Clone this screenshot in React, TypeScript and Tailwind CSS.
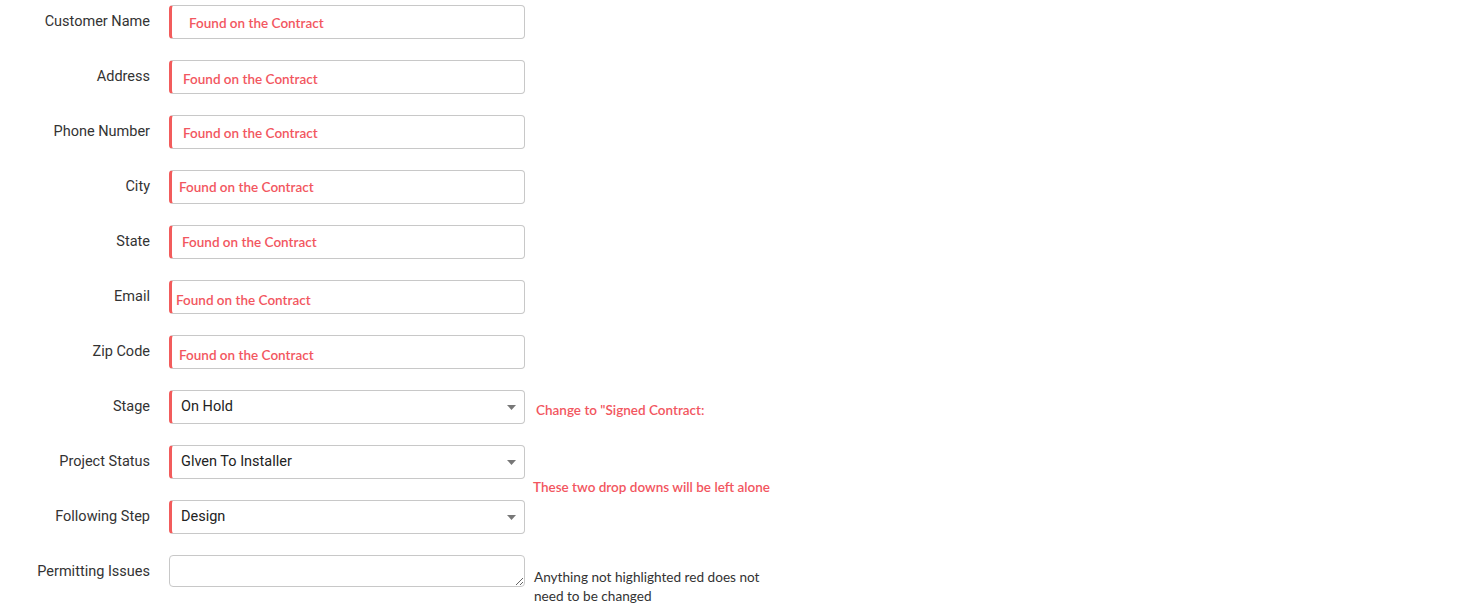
import React from 'react';

// Contract form screenshot: labelled inputs with red placeholder notes,
// three dropdowns and a textarea, plus annotations to the right.
const textFields: { label: string; pad: string; top: string }[] = [
  { label: 'Customer Name', pad: 'pl-[17px]', top: 'pt-[2px]' },
  { label: 'Address', pad: 'pl-[11px]', top: 'pt-[5px]' },
  { label: 'Phone Number', pad: 'pl-[11px]', top: 'pt-[3px]' },
  { label: 'City', pad: 'pl-[7px]', top: 'pt-[-1px]' },
  { label: 'State', pad: 'pl-[10px]', top: 'pt-[0px]' },
  { label: 'Email', pad: 'pl-[4px]', top: 'pt-[6px]' },
  { label: 'Zip Code', pad: 'pl-[7px]', top: 'pt-[6px]' },
];

const labelCls =
  'w-[150px] shrink-0 text-right text-[14.5px] leading-none text-[#333] font-["Roboto",sans-serif] pt-[10px]';
const boxCls =
  'h-[34px] w-[356px] shrink-0 rounded-[4px] border border-[#c8c8c8] border-l-[3px] border-l-[#f25c5c] bg-white';
const noteCls = 'font-["Lato","Open_Sans",sans-serif] text-[13.5px] font-semibold text-[#f25660]';

function Caret() {
  return (
    <svg width="9" height="5" viewBox="0 0 9 5" className="mr-[8px]">
      <path d="M0 0 L9 0 L4.5 5 Z" fill="#777" />
    </svg>
  );
}

function Row({ label, children, note }: { label: string; children: React.ReactNode; note?: React.ReactNode }) {
  return (
    <div className="flex h-[34px] items-start gap-[19px]">
      <div className={labelCls}>{label}</div>
      {children}
      {note}
    </div>
  );
}

function Select({ value }: { value: string }) {
  return (
    <div className={`${boxCls} flex items-center justify-between pl-[9px]`}>
      <span className='font-["Roboto",sans-serif] text-[14.5px] text-[#222]'>{value}</span>
      <Caret />
    </div>
  );
}

export default function App() {
  return (
    <div className="h-[605px] w-[1465px] overflow-hidden bg-white pt-[5px]">
      <div className="flex flex-col gap-[21px]">
        {textFields.map((f) => (
          <Row key={f.label} label={f.label}>
            <div className={`${boxCls} ${f.pad} ${f.top} flex items-center`}>
              <span className={noteCls}>Found on the Contract</span>
            </div>
          </Row>
        ))}

        <Row
          label="Stage"
          note={<div className={`${noteCls} -ml-[8px] pt-[10px] whitespace-nowrap`}>Change to "Signed Contract:</div>}
        >
          <Select value="On Hold" />
        </Row>

        <Row
          label="Project Status"
          note={
            <div className={`${noteCls} -ml-[11px] pt-[32px] whitespace-nowrap`}>
              These two drop downs will be left alone
            </div>
          }
        >
          <Select value="Glven To Installer" />
        </Row>

        <Row label="Following Step">
          <Select value="Design" />
        </Row>

        <Row
          label="Permitting Issues"
          note={
            <div className='-ml-[10px] pt-[13px] text-[13.6px] leading-[19px] text-[#333] font-["Lato","Open_Sans",sans-serif]'>
              Anything not highlighted red does not
              <br />
              need to be changed
            </div>
          }
        >
          <textarea
            className="h-[32px] w-[356px] shrink-0 resize-y rounded-[4px] border border-[#c8c8c8] bg-white outline-none"
            defaultValue=""
          />
        </Row>
      </div>
    </div>
  );
}
